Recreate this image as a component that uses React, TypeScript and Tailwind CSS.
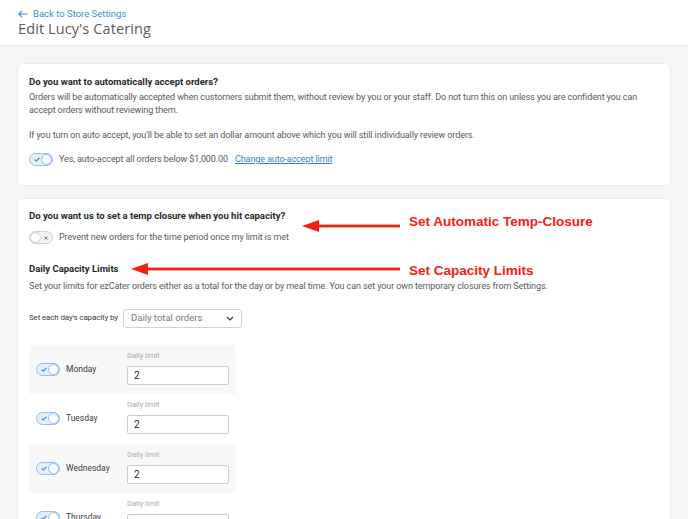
import React from 'react';

const days = ['Monday', 'Tuesday', 'Wednesday', 'Thursday'];

const Toggle: React.FC<{ on?: boolean }> = ({ on = true }) =>
  on ? (
    <span className="relative inline-flex h-[13px] w-[24px] flex-shrink-0 items-center rounded-full border border-[#8fc0ee] bg-[#e4f1fd]">
      <svg className="absolute left-[4px] top-[3px]" width="6" height="5" viewBox="0 0 6 5">
        <path d="M0.6 2.6 L2.3 4.1 L5.4 0.8" fill="none" stroke="#2f7fd3" strokeWidth="1.1" />
      </svg>
      <span className="absolute right-[0px] top-[0px] h-[11px] w-[11px] rounded-full border border-[#8fc0ee] bg-white" />
    </span>
  ) : (
    <span className="relative inline-flex h-[13px] w-[24px] flex-shrink-0 items-center rounded-full border border-[#cfcfcf] bg-[#f3f3f3]">
      <span className="absolute left-[0px] top-[0px] h-[11px] w-[11px] rounded-full border border-[#cfcfcf] bg-white" />
      <svg className="absolute right-[4px] top-[3.5px]" width="4" height="4" viewBox="0 0 4 4">
        <path d="M0.5 0.5 L3.5 3.5 M3.5 0.5 L0.5 3.5" stroke="#777" strokeWidth="1" />
      </svg>
    </span>
  );

const RedArrow: React.FC<{ width: number }> = ({ width }) => (
  <svg width={width} height="14" viewBox={`0 0 ${width} 14`}>
    <polygon points="0,7 17,1 17,13" fill="#f5210f" />
    <rect x="16" y="5.6" width={width - 16} height="2.8" fill="#f5210f" />
  </svg>
);

export default function App() {
  return (
    <div className="h-[519px] overflow-hidden bg-[#f4f5f7] font-['Roboto',sans-serif] text-[#5a5a5a]">
      {/* Header */}
      <div className="h-[46px] border-b border-[#e4e6ea] bg-white px-[18px] pt-[7px]">
        <a className="flex items-center gap-[5px] text-[9.5px] leading-[13px] text-[#3a8ee3]">
          <svg width="10" height="8" viewBox="0 0 10 8">
            <path d="M9.5 4 H1 M4 0.8 L0.8 4 L4 7.2" fill="none" stroke="#3a8ee3" strokeWidth="1.1" />
          </svg>
          Back to Store Settings
        </a>
        <h1 className="font-['Open_Sans',sans-serif] text-[14.5px] leading-[18px] font-normal text-[#5c5c5c] tracking-[0.1px]">
          Edit Lucy's Catering
        </h1>
      </div>

      <div className="flex flex-col gap-[14px] px-[18px] pt-[18px]">
        {/* Auto accept card */}
        <div className="h-[121px] rounded-[4px] bg-white px-[11px] pt-[11px] shadow-[0_0_2px_rgba(0,0,0,0.12)]">
          <h2 className="text-[9.5px] leading-[13px] font-bold text-[#1e2b29]">Do you want to automatically accept orders?</h2>
          <p className="mt-[3px] text-[9px] leading-[13px] tracking-[-0.1px]">
            Orders will be automatically accepted when customers submit them, without review by you or your staff. Do not turn this on unless you are confident you can accept orders without reviewing them.
          </p>
          <p className="mt-[12px] text-[9px] leading-[13px] tracking-[-0.1px]">
            If you turn on auto accept, you'll be able to set an dollar amount above which you will still individually review orders.
          </p>
          <div className="mt-[11px] flex items-center gap-[6px] text-[9px] tracking-[-0.1px]">
            <Toggle />
            <span>Yes, auto-accept all orders below $1,000.00</span>
            <a className="ml-[1px] text-[#2f80d6] underline">Change auto-accept limit</a>
          </div>
        </div>

        {/* Capacity card */}
        <div className="relative rounded-t-[4px] bg-white px-[11px] pt-[10px] pb-[10px] shadow-[0_0_2px_rgba(0,0,0,0.12)]">
          <h2 className="text-[9.5px] leading-[13px] font-bold text-[#1e2b29]">Do you want us to set a temp closure when you hit capacity?</h2>
          <div className="mt-[9px] flex items-center gap-[6px] text-[9px] tracking-[-0.1px]">
            <Toggle on={false} />
            <span>Prevent new orders for the time period once my limit is met</span>
          </div>

          <h3 className="mt-[17px] text-[9.5px] leading-[13px] font-bold text-[#1e2b29]">Daily Capacity Limits</h3>
          <p className="mt-[5px] text-[9px] leading-[13px] tracking-[-0.1px]">
            Set your limits for ezCater orders either as a total for the day or by meal time. You can set your own temporary closures from Settings.
          </p>

          <div className="mt-[16px] flex items-center">
            <span className="w-[94px] whitespace-nowrap text-[8px] tracking-[-0.15px] text-[#3c3c3c]">Set each day's capacity by</span>
            <div className="flex h-[19px] w-[119px] items-center justify-between rounded-[3px] border border-[#cfd3d8] px-[7px] text-[9.5px] text-[#777]">
              <span>Daily total orders</span>
              <svg width="8" height="5" viewBox="0 0 8 5">
                <path d="M1 1 L4 4 L7 1" fill="none" stroke="#333" strokeWidth="1.2" />
              </svg>
            </div>
          </div>

          <div className="mt-[17px] flex w-[207px] flex-col">
            {days.map((day, i) => (
              <div
                key={day}
                className={`flex h-[49.5px] items-center px-[7px] ${i % 2 === 0 ? 'bg-[#f8f8f8]' : 'bg-white'}`}
              >
                <Toggle />
                <span className="ml-[6px] w-[62px] text-[8.5px] text-[#3c3c3c]">{day}</span>
                <div className="-mt-[3px] flex flex-col">
                  <span className="text-[7.5px] leading-[10px] text-[#a9a9a9]">Daily limit</span>
                  <div className="mt-[5px] flex h-[19px] w-[102px] items-center rounded-[2px] border border-[#c9ccd0] bg-white px-[6px] text-[10px] text-[#222]">
                    2
                  </div>
                </div>
              </div>
            ))}
          </div>

          {/* Annotations */}
          <div className="absolute left-[284px] top-[20px] flex items-center">
            <RedArrow width={98} />
            <span className="ml-[9px] -mt-[7px] font-['Liberation_Sans',sans-serif] text-[13.5px] font-bold text-[#f5210f]">Set Automatic Temp-Closure</span>
          </div>
          <div className="absolute left-[113px] top-[58px] flex items-center">
            <RedArrow width={269} />
            <span className="ml-[9px] mt-[4px] font-['Liberation_Sans',sans-serif] text-[13.5px] font-bold text-[#f5210f]">Set Capacity Limits</span>
          </div>
        </div>
      </div>
    </div>
  );
}
